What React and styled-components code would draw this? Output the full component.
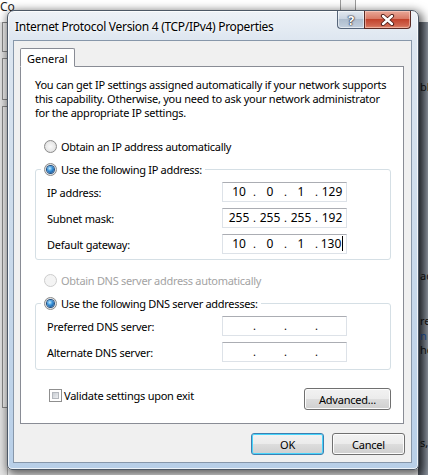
import React from "react";
import styled, { createGlobalStyle } from "styled-components";

const ui = `"Noto Sans", "DejaVu Sans", sans-serif`;

const GlobalStyle = createGlobalStyle`
  html, body {
    margin: 0;
    padding: 0;
    background: #ffffff;
  }
  body {
    font-family: ${ui};
    font-size: 11px;
    color: #000;
  }
`;

const Desktop = styled.div`
  position: relative;
  width: 428px;
  height: 475px;
  overflow: hidden;
  background: #ffffff;
`;

/* ---------- background window peeking out ---------- */

const Backdrop = styled.div`
  display: grid;
  grid-template-columns: 8px 1fr 10px;
  grid-template-rows: 22px 1fr;
  height: 100%;
`;

const BackTop = styled.div`
  grid-column: 1 / -1;
  display: flex;
  align-items: flex-start;
  font-size: 12px;
  line-height: 14px;
  color: #222;
`;

const BackScroll = styled.div`
  margin-left: 325px;
  width: 14px;
  height: 12px;
  border-left: 1px solid #999;
  border-right: 1px solid #999;
  background: #f4f4f4;
`;

const BackLeft = styled.div`
  display: flex;
  flex-direction: column;
  gap: 6px;
  background: #e4e4e4;
  border-right: 1px solid #b0b0b0;
`;

const BackLeftBox = styled.div`
  height: ${(p) => p.$h}px;
  margin-left: 2px;
  border: 1px solid #8a8a8a;
  border-right: none;
  background: #f2f2f2;
`;

const BackMiddle = styled.div`
  background: #f7f7f7;
`;

const BackRight = styled.div`
  display: flex;
  flex-direction: column;
  padding-left: 2px;
  background: linear-gradient(to right, #4b515b, #8b929c);
  font-size: 11px;
  line-height: 13px;
  color: #111;
  overflow: hidden;
  white-space: nowrap;
`;

const Frag = styled.span`
  margin-top: ${(p) => p.$gap}px;
  color: ${(p) => (p.$link ? "#1c4f9c" : "#111")};
`;

/* ---------- dialog frame ---------- */

const Dialog = styled.div`
  position: absolute;
  left: 7px;
  top: 10px;
  width: 412px;
  height: 460px;
  box-sizing: border-box;
  display: flex;
  flex-direction: column;
  padding: 0 6px 6px 5px;
  border: 1px solid #4d5866;
  border-radius: 7px 7px 5px 5px;
  background: linear-gradient(to bottom, #eef2f7 0, #dde6f0 30px, #c7d8ea 60%, #b8cfe8 100%);
  box-shadow: 2px 3px 10px 2px rgba(0, 0, 0, 0.6),
    inset 0 0 0 1px rgba(255, 255, 255, 0.75);
`;

const TitleBar = styled.div`
  display: flex;
  align-items: flex-start;
  height: 29px;
  flex: none;
`;

const Title = styled.div`
  flex: 1;
  padding: 8px 0 0 2px;
  font-size: 12px;
  line-height: 15px;
  letter-spacing: -0.3px;
  color: #000;
  text-shadow: 0 0 6px #fff, 0 0 3px #fff;
  white-space: nowrap;
`;

const CaptionButtons = styled.div`
  display: flex;
  margin-right: 1px;
`;

const HelpButton = styled.div`
  width: 27px;
  height: 18px;
  box-sizing: border-box;
  display: flex;
  align-items: center;
  justify-content: center;
  border: 1px solid #56657a;
  border-top: none;
  border-right: none;
  border-radius: 0 0 0 4px;
  background: linear-gradient(to bottom, #e3e9f0 0, #c9d4e1 45%, #aebdce 50%, #c3d0de 100%);
  box-shadow: inset 0 0 0 1px rgba(255, 255, 255, 0.55);
  color: #fff;
  font-size: 13px;
  font-weight: bold;
  text-shadow: 0 0 2px #223, 0 0 1px #223, 0 0 1px #223;
`;

const CloseButton = styled.div`
  width: 47px;
  height: 18px;
  box-sizing: border-box;
  display: flex;
  align-items: center;
  justify-content: center;
  border: 1px solid #5a2a24;
  border-top: none;
  border-radius: 0 0 4px 0;
  background: linear-gradient(to bottom, #e9a898 0, #d97a66 45%, #c2432c 50%, #d0654f 85%, #e08a6e 100%);
  box-shadow: inset 0 0 0 1px rgba(255, 220, 210, 0.5);
`;

const Client = styled.div`
  flex: 1;
  display: flex;
  flex-direction: column;
  border: 1px solid #8797aa;
  background: #f0f0f0;
  padding: 7px 7px 0 6px;
`;

/* ---------- tab ---------- */

const TabStrip = styled.div`
  display: flex;
  position: relative;
  z-index: 1;
  margin-bottom: -1px;
`;

const Tab = styled.div`
  height: 19px;
  box-sizing: border-box;
  padding: 2px 6px 0 6px;
  border: 1px solid #898c95;
  border-bottom: 1px solid #fff;
  border-radius: 2px 2px 0 0;
  background: #fff;
  line-height: 15px;
`;

const Panel = styled.div`
  height: 358px;
  box-sizing: border-box;
  border: 1px solid #898c95;
  background: #fff;
  display: flex;
  flex-direction: column;
  padding: 11px 12px 0 14px;
`;

const Intro = styled.p`
  margin: 0;
  line-height: 14px;
  letter-spacing: -0.25px;
`;

/* ---------- radios, groups ---------- */

const OptionRow = styled.div`
  display: flex;
  align-items: center;
  gap: 4px;
  height: 16px;
  margin-top: ${(p) => p.$top || 0}px;
  margin-left: 9px;
  color: ${(p) => (p.$disabled ? "#a3a3a3" : "#000")};
  letter-spacing: -0.3px;
`;

const RadioCircle = styled.span`
  flex: none;
  box-sizing: border-box;
  width: 13px;
  height: 13px;
  border-radius: 50%;
  border: 1px solid ${(p) => (p.$disabled ? "#cdcdcd" : "#8b8b8b")};
  background: ${(p) =>
    p.$disabled
      ? "#f4f4f4"
      : "radial-gradient(circle at 50% 50%, #f9f9f9 0, #e9e9e9 55%, #cdcdcd 100%)"};
  display: flex;
  align-items: center;
  justify-content: center;
  &::after {
    content: "";
    width: 7px;
    height: 7px;
    border-radius: 50%;
    background: radial-gradient(circle at 40% 35%, #c6ecff 0, #3d97dd 40%, #114f93 85%);
    box-shadow: 0 0 0 1px #1f4f82;
    display: ${(p) => (p.$checked ? "block" : "none")};
  }
`;

const Group = styled.div`
  margin-top: 15px;
  border: 1px solid #d5dfe5;
  border-radius: 3px;
  padding: 0 0 ${(p) => p.$bottom}px 11px;
  display: flex;
  flex-direction: column;
`;

const GroupHeader = styled.div`
  display: flex;
  align-items: center;
  gap: 4px;
  align-self: flex-start;
  height: 16px;
  margin: -9px 0 0 -6px;
  padding: 0 3px;
  background: #fff;
  letter-spacing: -0.3px;
`;

const Fields = styled.div`
  display: grid;
  grid-template-columns: 175px 125px;
  row-gap: 6px;
  margin-top: 5px;
  align-items: center;
`;

const FieldLabel = styled.span`
  letter-spacing: -0.25px;
`;

const IpBox = styled.div`
  display: grid;
  grid-template-columns: 28px 3px 28px 3px 28px 3px 28px;
  width: 125px;
  height: 20px;
  box-sizing: border-box;
  padding-left: 2px;
  border: 1px solid #dde2e8;
  border-top-color: #abadb3;
  background: #fff;
  align-items: center;
  font-size: 12px;
  line-height: 16px;
`;

const Octet = styled.span`
  text-align: center;
`;

const Dot = styled.span`
  text-align: center;
  font-size: 11px;
`;

const Caret = styled.span`
  display: inline-block;
  width: 1px;
  height: 15px;
  margin-left: 1px;
  vertical-align: -3px;
  background: #000;
`;

/* ---------- bottom ---------- */

const PanelFooter = styled.div`
  display: flex;
  justify-content: space-between;
  align-items: flex-start;
  margin-top: 17px;
`;

const CheckRow = styled.label`
  display: flex;
  align-items: center;
  gap: 2px;
  height: 16px;
  margin-left: 14px;
  letter-spacing: -0.25px;
`;

const CheckBox = styled.span`
  width: 13px;
  height: 13px;
  box-sizing: border-box;
  border: 1px solid #8f8f8f;
  background: #fff;
  padding: 2px;
  display: flex;
  &::after {
    content: "";
    flex: 1;
    border: 1px solid #b4b8be;
    background: linear-gradient(135deg, #c9cdd3 0, #eceef0 100%);
  }
`;

const Button = styled.div`
  width: ${(p) => p.$w || 73}px;
  height: 22px;
  box-sizing: border-box;
  display: flex;
  align-items: center;
  justify-content: center;
  border: 1px solid ${(p) => (p.$default ? "#3c7fb1" : "#707070")};
  border-radius: 3px;
  background: linear-gradient(to bottom, #f2f2f2 0, #ebebeb 50%, #dddddd 50%, #cfcfcf 100%);
  box-shadow: inset 0 0 0 1px ${(p) => (p.$default ? "#48d4fb" : "#fcfcfc")};
  letter-spacing: -0.2px;
  margin-top: ${(p) => p.$top || 0}px;
`;

const DialogButtons = styled.div`
  display: flex;
  justify-content: flex-end;
  gap: 8px;
  margin: 9px -1px 0 0;
`;

const Radio = ({ checked, disabled }) => (
  <RadioCircle $checked={checked} $disabled={disabled} />
);

const IpField = ({ octets, caret }) => (
  <IpBox>
    {[0, 1, 2, 3].map((i) => (
      <React.Fragment key={i}>
        <Octet>
          {octets ? octets[i] : ""}
          {caret && i === 3 ? <Caret /> : null}
        </Octet>
        {i < 3 ? <Dot>.</Dot> : null}
      </React.Fragment>
    ))}
  </IpBox>
);

const CloseGlyph = () => (
  <svg width="15" height="12" viewBox="0 0 15 12">
    <path d="M3 2 L12 10 M12 2 L3 10" stroke="#4a1a14" strokeWidth="4.2" strokeLinecap="round" />
    <path d="M3 2 L12 10 M12 2 L3 10" stroke="#fff" strokeWidth="2.4" strokeLinecap="round" />
  </svg>
);

export default function App() {
  return (
    <>
      <GlobalStyle />
      <Desktop>
        <Backdrop>
          <BackTop>
            <span>Co</span>
            <BackScroll />
          </BackTop>
          <BackLeft>
            <BackLeftBox $h={28} />
            <BackLeftBox $h={40} />
            <BackLeftBox $h={300} />
          </BackLeft>
          <BackMiddle />
          <BackRight>
            <Frag $gap={58}>bl</Frag>
            <Frag $gap={176}>ad</Frag>
            <Frag $gap={32}>re</Frag>
            <Frag $gap={2} $link>n</Frag>
            <Frag $gap={1}>he</Frag>
            <Frag $gap={80}>s,</Frag>
          </BackRight>
        </Backdrop>

        <Dialog>
          <TitleBar>
            <Title>Internet Protocol Version 4 (TCP/IPv4) Properties</Title>
            <CaptionButtons>
              <HelpButton>?</HelpButton>
              <CloseButton>
                <CloseGlyph />
              </CloseButton>
            </CaptionButtons>
          </TitleBar>

          <Client>
            <TabStrip>
              <Tab>General</Tab>
            </TabStrip>
            <Panel>
              <Intro>
                You can get IP settings assigned automatically if your network supports
                this capability. Otherwise, you need to ask your network administrator
                for the appropriate IP settings.
              </Intro>

              <OptionRow $top={18}>
                <Radio />
                Obtain an IP address automatically
              </OptionRow>

              <Group $bottom={5}>
                <GroupHeader>
                  <Radio checked />
                  Use the following IP address:
                </GroupHeader>
                <Fields>
                  <FieldLabel>IP address:</FieldLabel>
                  <IpField octets={["10", "0", "1", "129"]} />
                  <FieldLabel>Subnet mask:</FieldLabel>
                  <IpField octets={["255", "255", "255", "192"]} />
                  <FieldLabel>Default gateway:</FieldLabel>
                  <IpField octets={["10", "0", "1", "130"]} caret />
                </Fields>
              </Group>

              <OptionRow $top={12} $disabled>
                <Radio disabled />
                Obtain DNS server address automatically
              </OptionRow>

              <Group $bottom={7}>
                <GroupHeader>
                  <Radio checked />
                  Use the following DNS server addresses:
                </GroupHeader>
                <Fields>
                  <FieldLabel>Preferred DNS server:</FieldLabel>
                  <IpField />
                  <FieldLabel>Alternate DNS server:</FieldLabel>
                  <IpField />
                </Fields>
              </Group>

              <PanelFooter>
                <CheckRow>
                  <CheckBox />
                  Validate settings upon exit
                </CheckRow>
                <Button $w={87} $top={1}>Advanced...</Button>
              </PanelFooter>
            </Panel>

            <DialogButtons>
              <Button $default>OK</Button>
              <Button>Cancel</Button>
            </DialogButtons>
          </Client>
        </Dialog>
      </Desktop>
    </>
  );
}
